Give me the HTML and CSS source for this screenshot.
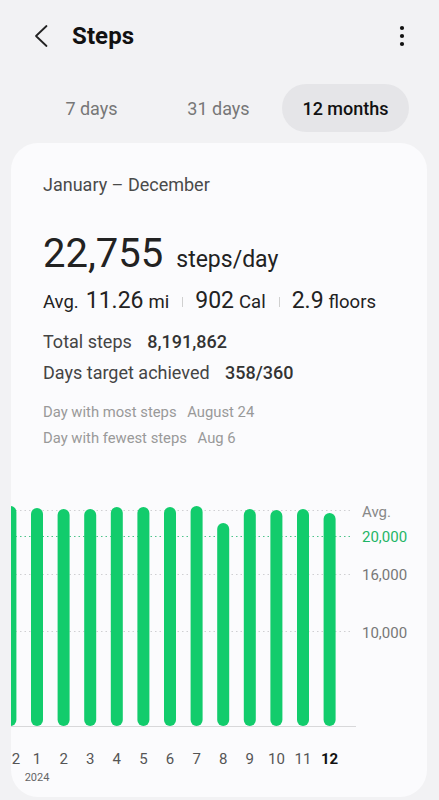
FILE: index.html
```html
<!DOCTYPE html>
<html lang="en">
<head>
    <meta charset="UTF-8" />
    <meta name="viewport" content="width=device-width, initial-scale=1.0" />
    <title>Steps</title>
    <link rel="stylesheet" href="styles.css">
</head>
<body>
    <header class="top-bar">
        <button class="icon-btn back-btn" aria-label="Back">
            <svg width="24" height="24" viewBox="0 0 24 24">
                <path d="M17.5 2 L7 12 L17.5 22" fill="none" stroke="#222" stroke-width="1.8" stroke-linecap="round" stroke-linejoin="round"/>
            </svg>
        </button>
        <h1 class="title">Steps</h1>
        <button class="icon-btn more-btn" aria-label="More options">
            <svg width="8" height="24" viewBox="0 0 8 24">
                <circle cx="4" cy="4" r="2.1" fill="#111"/>
                <circle cx="4" cy="12" r="2.1" fill="#111"/>
                <circle cx="4" cy="20" r="2.1" fill="#111"/>
            </svg>
        </button>
    </header>

    <nav class="tabs">
        <div class="tab">7 days</div>
        <div class="tab">31 days</div>
        <div class="tab active">12 months</div>
    </nav>

    <main class="card">
        <div class="summary">
            <div class="range">January – December</div>
            <div class="headline">
                <span class="big">22,755</span>
                <span class="unit">steps/day</span>
            </div>
            <div class="avg-row">
                <span class="lbl">Avg.</span>
                <span class="num">11.26</span>
                <span class="lbl">mi</span>
                <span class="sep"></span>
                <span class="num">902</span>
                <span class="lbl">Cal</span>
                <span class="sep"></span>
                <span class="num">2.9</span>
                <span class="lbl">floors</span>
            </div>
            <div class="stat first">Total steps <b>8,191,862</b></div>
            <div class="stat">Days target achieved <b>358/360</b></div>
            <div class="note first">Day with most steps <span>August 24</span></div>
            <div class="note">Day with fewest steps <span>Aug 6</span></div>
        </div>

        <svg class="chart" width="416" height="302" viewBox="0 0 416 302">
            <g class="grid">
                <line x1="0" y1="14.5" x2="341" y2="14.5" class="dot"/>
                <line x1="0" y1="40.5" x2="341" y2="40.5" class="dot green"/>
                <line x1="0" y1="78.5" x2="341" y2="78.5" class="dot"/>
                <line x1="0" y1="135.5" x2="341" y2="135.5" class="dot"/>
            </g>
            <g class="bars" fill="#12cc6c">
                <rect x="-6.6" y="10" width="12" height="220" rx="6"/>
                <rect x="20" y="12" width="12" height="218" rx="6"/>
                <rect x="46.6" y="13" width="12" height="217" rx="6"/>
                <rect x="73.2" y="13" width="12" height="217" rx="6"/>
                <rect x="99.8" y="11" width="12" height="219" rx="6"/>
                <rect x="126.4" y="11" width="12" height="219" rx="6"/>
                <rect x="153" y="11" width="12" height="219" rx="6"/>
                <rect x="179.6" y="10" width="12" height="220" rx="6"/>
                <rect x="206.2" y="27" width="12" height="203" rx="6"/>
                <rect x="232.8" y="13" width="12" height="217" rx="6"/>
                <rect x="259.4" y="14" width="12" height="216" rx="6"/>
                <rect x="286" y="13" width="12" height="217" rx="6"/>
                <rect x="312.6" y="17" width="12" height="213" rx="6"/>
            </g>
            <line x1="0" y1="230.5" x2="345" y2="230.5" class="baseline"/>
            <g class="y-labels">
                <text x="351" y="21" class="avg">Avg.</text>
                <text x="351" y="46" class="goal">20,000</text>
                <text x="351" y="84">16,000</text>
                <text x="351" y="142">10,000</text>
            </g>
            <g class="x-labels" text-anchor="middle">
                <text x="5" y="268">2</text>
                <text x="26" y="268">1</text>
                <text x="52.6" y="268">2</text>
                <text x="79.2" y="268">3</text>
                <text x="105.8" y="268">4</text>
                <text x="132.4" y="268">5</text>
                <text x="159" y="268">6</text>
                <text x="185.6" y="268">7</text>
                <text x="212.2" y="268">8</text>
                <text x="238.8" y="268">9</text>
                <text x="265.4" y="268">10</text>
                <text x="292" y="268">11</text>
                <text x="318.6" y="268" class="current">12</text>
                <text x="26" y="285" class="year">2024</text>
            </g>
        </svg>
    </main>
</body>
</html>
```

FILE: styles.css
```css
body {
    font-family: Roboto, "Noto Sans", Arial, sans-serif;
    background-color: #f2f2f4;
    margin: 0;
    padding: 0;
    color: #222;
}
.top-bar {
    display: flex;
    align-items: center;
    height: 72px;
    padding: 0 33px 0 29px;
}
.icon-btn {
    background: none;
    border: none;
    padding: 0;
    display: flex;
    align-items: center;
    cursor: pointer;
}
.title {
    flex: 1;
    margin: 0 0 0 19px;
    font-size: 24px;
    font-weight: 700;
    color: #111;
    letter-spacing: 0.1px;
}
.tabs {
    display: grid;
    grid-template-columns: repeat(3, 1fr);
    margin: 12px 30px 0 28px;
    height: 48px;
}
.tab {
    display: flex;
    align-items: center;
    justify-content: center;
    font-size: 18px;
    color: #777;
    border-radius: 24px;
}
.tab.active {
    background-color: #e5e5e8;
    color: #111;
    font-weight: 500;
}
.card {
    margin: 11px 12px 3px 11px;
    height: 654px;
    background-color: #fbfbfd;
    border-radius: 27px;
    overflow: hidden;
}
.summary {
    padding: 32px 32px 0;
}
.range {
    font-size: 18px;
    line-height: 20px;
    color: #4a4a4a;
}
.headline {
    margin-top: 35px;
    line-height: 48px;
    display: flex;
    align-items: baseline;
}
.big {
    font-size: 40px;
    color: #222;
}
.unit {
    margin-left: 13px;
    font-size: 23px;
    color: #222;
}
.avg-row {
    display: flex;
    align-items: baseline;
    margin-top: 3px;
    line-height: 28px;
}
.avg-row .lbl {
    font-size: 18.5px;
    color: #222;
}
.avg-row .num {
    font-size: 23px;
    color: #222;
    margin: 0 5px 0 12px;
}
.avg-row .lbl:first-child + .num {
    margin-left: 7px;
}
.avg-row .sep {
    width: 1px;
    height: 10px;
    background-color: #d0d0d0;
    margin-left: 13px;
    align-self: center;
}
.stat {
    font-size: 18px;
    line-height: 24px;
    color: #444;
    margin-top: 7px;
}
.stat.first {
    margin-top: 14px;
}
.stat b {
    font-weight: 500;
    color: #333;
    margin-left: 11px;
}
.note {
    font-size: 14.8px;
    line-height: 20px;
    color: #999;
    margin-top: 6px;
}
.note.first {
    margin-top: 17px;
}
.note span {
    margin-left: 7px;
}
.chart {
    display: block;
    margin-top: 48px;
}
.dot {
    stroke: #cfcfd2;
    stroke-width: 1;
    stroke-dasharray: 1.5 3;
}
.dot.green {
    stroke: #4cc48a;
}
.baseline {
    stroke: #d8d8da;
    stroke-width: 1.2;
}
.y-labels text {
    font-size: 15px;
    fill: #777;
}
.y-labels .avg {
    fill: #888;
}
.y-labels .goal {
    fill: #1fb566;
}
.x-labels text {
    font-size: 15px;
    fill: #555;
}
.x-labels .current {
    fill: #111;
    font-weight: 700;
}
.x-labels .year {
    font-size: 11px;
    fill: #666;
}
```
